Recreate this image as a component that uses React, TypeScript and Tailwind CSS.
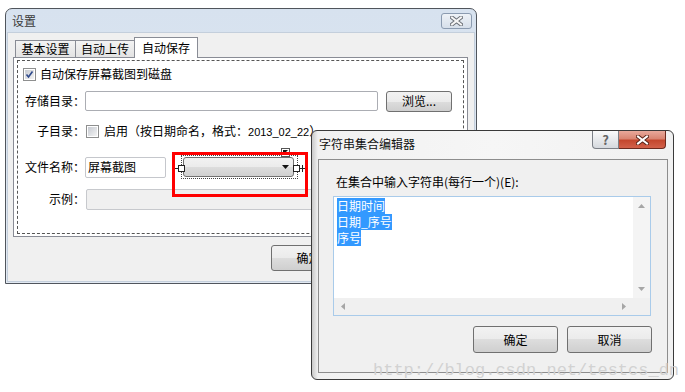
import type { ReactNode } from "react";

const btnFace =
  "border border-[#707070] rounded-[3px] bg-[linear-gradient(#f2f2f2_0%,#ebebeb_50%,#dddddd_50%,#cfcfcf_100%)]";

function CheckBox({ checked = false }: { checked?: boolean }) {
  return (
    <span className="flex h-[13px] w-[13px] shrink-0 items-center justify-center border border-[#8e8f8f] bg-white">
      <span className="flex h-[9px] w-[9px] items-center justify-center bg-gradient-to-br from-[#c6cad1] to-[#f4f4f4]">
        {checked ? (
          <svg width="9" height="9" viewBox="0 0 9 9">
            <path d="M1.5 4.5 L3.5 7 L7.5 1.5" fill="none" stroke="#2f4a8c" strokeWidth="1.6" />
          </svg>
        ) : null}
      </span>
    </span>
  );
}

function CloseGlyph({ fill = "#fff", edge = "#3a3a3a" }: { fill?: string; edge?: string }) {
  return (
    <svg width="13" height="10" viewBox="0 0 13 10">
      <path d="M2 1.5 L11 8.5 M11 1.5 L2 8.5" stroke={edge} strokeWidth="4" strokeLinecap="square" />
      <path d="M2 1.5 L11 8.5 M11 1.5 L2 8.5" stroke={fill} strokeWidth="2" strokeLinecap="square" />
    </svg>
  );
}

function Tab({ children, width, active = false }: { children: ReactNode; width: string; active?: boolean }) {
  if (active) {
    return (
      <div
        className={`relative z-10 -mb-px flex h-[21px] ${width} items-center justify-center border border-b-0 border-[#898c95] bg-white text-[12px]`}
      >
        {children}
      </div>
    );
  }
  return (
    <div
      className={`flex h-[17px] ${width} items-center justify-center border border-b-0 border-r-0 border-[#898c95] bg-gradient-to-b from-[#f3f3f3] to-[#e3e3e3] text-[12px]`}
    >
      {children}
    </div>
  );
}

function Label({ children }: { children: ReactNode }) {
  return <div className="w-[67px] shrink-0 text-right text-[12px]">{children}</div>;
}

function ComboDesigner() {
  return (
    <div className="relative ml-[6px] flex h-[32px] w-[132px] items-center pl-[11px]">
      <div className="absolute left-[9px] top-[4px] h-[24px] w-[117px] border border-dotted border-[#444]" />
      <div className={`relative flex h-[20px] w-[111px] items-center justify-end pr-[4px] ${btnFace}`}>
        <svg width="7" height="4" viewBox="0 0 7 4">
          <path d="M0 0 H7 L3.5 4 Z" fill="#111" />
        </svg>
      </div>
      <div className="absolute left-0 top-[17px] h-px w-[6px] bg-[#222]" />
      <div className="absolute left-[6px] top-[14px] h-[7px] w-[7px] border border-[#222] bg-white" />
      <div className="absolute left-[121px] top-[14px] h-[7px] w-[7px] border border-[#222] bg-white" />
      <div className="absolute left-[128px] top-[17px] h-px w-[5px] bg-[#222]" />
      <div className="absolute left-[130px] top-[14px] h-[7px] w-px bg-[#222]" />
      <div className="absolute left-[109px] top-[-3px] flex h-[9px] w-[9px] items-start justify-start border border-[#555] bg-white pl-[1px] pt-[1px]">
        <svg width="5" height="5" viewBox="0 0 5 5">
          <path d="M0 0 H5 L0 5 Z" fill="#111" />
        </svg>
      </div>
    </div>
  );
}

function SettingsWindow() {
  return (
    <div className="absolute left-[5px] top-[8px] flex h-[276px] w-[472px] flex-col rounded-t-[7px] border border-[#50555c] bg-gradient-to-b from-[#d7e2ef] to-[#e2e9f2]">
      <div className="flex h-[23px] shrink-0 items-center justify-between pl-[6px] pr-[4px]">
        <span className="text-[12px] text-[#3a3a3a]">设置</span>
        <div className="flex h-[16px] w-[31px] items-center justify-center rounded-[3px] border border-[#8b9bb0] bg-gradient-to-b from-[#eef2f7] to-[#d6dfea]">
          <CloseGlyph fill="#f6f6f6" edge="#6a6f76" />
        </div>
      </div>
      <div className="mx-[1px] mb-[1px] flex flex-1 flex-col border border-[#c4cfdc] bg-[#f0f0f0] pl-[5px] pr-[6px] pt-[4px]">
        <div className="flex items-end pl-[2px]">
          <Tab width="w-[60px]">基本设置</Tab>
          <Tab width="w-[59px]">自动上传</Tab>
          <Tab width="w-[64px]" active>
            自动保存
          </Tab>
        </div>
        <div className="flex h-[180px] flex-col border border-[#898c95] bg-white px-[3px] pb-[2px] pt-[2px]">
          <div className="flex flex-1 flex-col border border-dashed border-[#555] pt-[1px]">
            <div className="flex h-[24px] items-center gap-[4px] pl-[5px]">
              <CheckBox checked />
              <span className="text-[12px]">自动保存屏幕截图到磁盘</span>
            </div>
            <div className="flex h-[30px] items-center">
              <Label>存储目录：</Label>
              <div className="h-[20px] w-[293px] rounded-[2px] border border-[#abadb3] bg-white" />
              <div className={`ml-[8px] flex h-[21px] w-[66px] items-center justify-center text-[12px] ${btnFace}`}>
                浏览...
              </div>
            </div>
            <div className="flex h-[30px] items-center">
              <Label>子目录：</Label>
              <span className="ml-[1px]">
                <CheckBox />
              </span>
              <span className="ml-[5px] whitespace-nowrap text-[12px]">
                启用（按日期命名，格式：
                <span className="font-['Liberation_Sans',sans-serif] text-[11px]">2013_02_22</span>）
              </span>
            </div>
            <div className="flex h-[42px] items-center">
              <Label>文件名称：</Label>
              <div className="flex h-[21px] w-[81px] items-center rounded-[2px] border border-[#c5c7cc] bg-white pl-[2px] text-[12px]">
                屏幕截图
              </div>
              <ComboDesigner />
            </div>
            <div className="flex h-[22px] items-center">
              <Label>示例：</Label>
              <div className="ml-[1px] h-[21px] w-[366px] rounded-[2px] border border-[#c7c9cd] bg-[#f0f0f0]" />
            </div>
          </div>
        </div>
        <div className="ml-[258px] mt-[8px] flex gap-[9px]">
          <div className={`flex h-[26px] w-[75px] items-center justify-center text-[12px] ${btnFace}`}>确定</div>
          <div className={`flex h-[26px] w-[75px] items-center justify-center text-[12px] ${btnFace}`}>取消</div>
        </div>
      </div>
    </div>
  );
}

function StringEditorDialog() {
  return (
    <div className="absolute left-[311px] top-[130px] flex h-[250px] w-[363px] flex-col rounded-[6px] border border-[#3a3a3a] bg-[linear-gradient(90deg,#c9c9c9_0px,#f1f1f1_6px,#f6f6f6_50%,#f1f1f1_100%)]">
      <div className="flex h-[28px] shrink-0 items-start justify-between pr-[7px]">
        <span className="pl-[7px] pt-[7px] text-[12px] text-[#111]">字符串集合编辑器</span>
        <div className="flex">
          <div className="flex h-[18px] w-[27px] items-center justify-center rounded-bl-[4px] border border-t-0 border-[#7b7f86] bg-gradient-to-b from-[#fafafa] to-[#d5d9de] text-[13px] font-bold text-[#666]">
            ?
          </div>
          <div className="flex h-[18px] w-[47px] items-center justify-center rounded-br-[4px] border border-l-0 border-t-0 border-[#6c2a1e] bg-[linear-gradient(#e9a99b_0%,#d98572_45%,#c4472e_55%,#d2614a_100%)]">
            <CloseGlyph fill="#ffffff" edge="#5a2418" />
          </div>
        </div>
      </div>
      <div className="mb-[6px] ml-[6px] mr-[5px] flex flex-1 flex-col border border-[#8d8d8d] bg-[#f0f0f0]">
        <div className="pl-[17px] pt-[16px] text-[12px]">在集合中输入字符串(每行一个)(E):</div>
        <div className="ml-[14px] mt-[8px] flex h-[120px] w-[318px] flex-col border border-[#a9cbea] bg-white">
          <div className="flex flex-1">
            <div className="flex flex-1 flex-col items-start pl-[3px] pt-[1px] text-[12px] leading-[16px]">
              <span className="bg-[#3399ff] text-white">日期时间</span>
              <span className="bg-[#3399ff] text-white">日期_序号</span>
              <span className="bg-[#3399ff] text-white">序号</span>
            </div>
            <div className="flex w-[17px] flex-col items-center justify-between bg-[#f4f4f4] py-[7px]">
              <svg width="7" height="4" viewBox="0 0 7 4">
                <path d="M0 4 H7 L3.5 0 Z" fill="#a6a6a6" />
              </svg>
              <svg width="7" height="4" viewBox="0 0 7 4">
                <path d="M0 0 H7 L3.5 4 Z" fill="#a6a6a6" />
              </svg>
            </div>
          </div>
          <div className="flex h-[17px]">
            <div className="flex flex-1 items-center justify-between bg-[#f0f0f0] px-[7px]">
              <svg width="4" height="7" viewBox="0 0 4 7">
                <path d="M4 0 V7 L0 3.5 Z" fill="#a6a6a6" />
              </svg>
              <svg width="4" height="7" viewBox="0 0 4 7">
                <path d="M0 0 V7 L4 3.5 Z" fill="#a6a6a6" />
              </svg>
            </div>
            <div className="w-[17px] bg-[#f0f0f0]" />
          </div>
        </div>
        <div className="mt-[10px] flex justify-end gap-[9px] pr-[15px]">
          <div className={`flex h-[27px] w-[85px] items-center justify-center text-[12px] ${btnFace}`}>确定</div>
          <div className={`flex h-[27px] w-[85px] items-center justify-center text-[12px] ${btnFace}`}>取消</div>
        </div>
      </div>
    </div>
  );
}

export default function App() {
  return (
    <div className="relative h-[392px] w-[685px] overflow-hidden bg-white font-['Noto_Sans_CJK_SC',sans-serif] text-[12px] leading-none text-black">
      <SettingsWindow />
      <div className="absolute left-[172px] top-[152px] h-[45px] w-[136px] border-[3px] border-[#ff0000]" />
      <StringEditorDialog />
      <div className="absolute left-[373px] top-[362px] whitespace-nowrap font-['Liberation_Mono',monospace] text-[17px] leading-[17px] text-[#d2d2d2]">
        http://blog.csdn.net/testcs_dn
      </div>
    </div>
  );
}
